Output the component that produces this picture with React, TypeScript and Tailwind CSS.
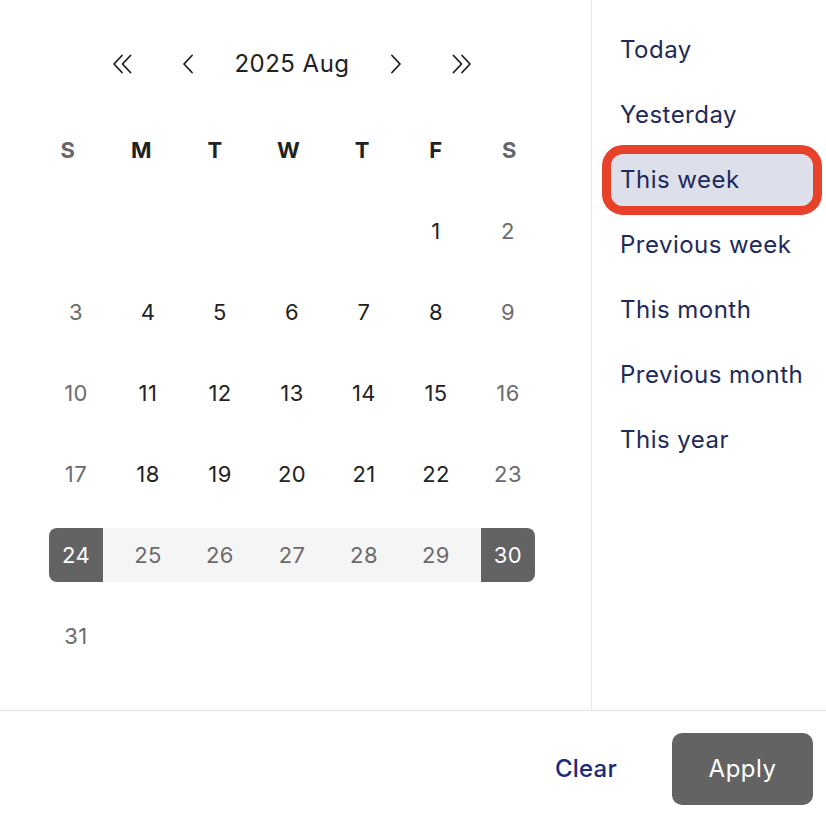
import React from 'react'

const font = { fontFamily: 'Inter, "Noto Sans", sans-serif' }

const Chevron = ({ dir, double }: { dir: 'left' | 'right'; double?: boolean }) => {
  const flip = dir === 'right' ? 'scale(-1,1)' : undefined
  if (double) {
    return (
      <svg width="22" height="20" viewBox="0 0 22 20" fill="none">
        <g transform={flip} style={{ transformOrigin: 'center' }}>
          <path
            d="M11 1.5 L3 10 L11 18.5 M19.5 1.5 L11.5 10 L19.5 18.5"
            stroke="#1f1f1f"
            strokeWidth="1.8"
            strokeLinecap="round"
            strokeLinejoin="round"
          />
        </g>
      </svg>
    )
  }
  return (
    <svg width="12" height="20" viewBox="0 0 12 20" fill="none">
      <g transform={flip} style={{ transformOrigin: 'center' }}>
        <path
          d="M10 1.5 L2 10 L10 18.5"
          stroke="#1f1f1f"
          strokeWidth="1.8"
          strokeLinecap="round"
          strokeLinejoin="round"
        />
      </g>
    </svg>
  )
}

const weekdays = ['S', 'M', 'T', 'W', 'T', 'F', 'S']

// August 2025 starts on a Friday
const weeks: (number | null)[][] = [
  [null, null, null, null, null, 1, 2],
  [3, 4, 5, 6, 7, 8, 9],
  [10, 11, 12, 13, 14, 15, 16],
  [17, 18, 19, 20, 21, 22, 23],
  [24, 25, 26, 27, 28, 29, 30],
  [31, null, null, null, null, null, null],
]

const rangeStart = 24
const rangeEnd = 30

const presets = [
  'Today',
  'Yesterday',
  'This week',
  'Previous week',
  'This month',
  'Previous month',
  'This year',
]

const DayCell = ({ day, col }: { day: number | null; col: number }) => {
  if (day === null) return <div className="w-[72px] h-[54px]" />
  const isStart = day === rangeStart
  const isEnd = day === rangeEnd
  const inRange = day > rangeStart && day < rangeEnd
  const weekend = col === 0 || col === 6

  let outer = 'w-[72px] h-[54px] flex items-center justify-center'
  if (inRange) outer += ' bg-[#f5f5f5]'
  if (isStart) outer += ' bg-[linear-gradient(to_right,transparent_50%,#f5f5f5_50%)]'
  if (isEnd) outer += ' bg-[linear-gradient(to_right,#f5f5f5_50%,transparent_50%)]'

  let inner = 'w-[54px] h-[54px] flex items-center justify-center text-[22px] tracking-[0.02em]'
  if (isStart || isEnd) {
    inner += ' bg-[#636363] text-white rounded-[8px]'
    if (isStart) inner += ' rounded-r-none'
    if (isEnd) inner += ' rounded-l-none'
  } else if (inRange || weekend) {
    inner += ' text-[#6b6b6b]'
  } else {
    inner += ' text-[#222222]'
  }

  return (
    <div className={outer}>
      <div className={inner}>{day}</div>
    </div>
  )
}

const App = () => {
  return (
    <div className="w-[826px] h-[820px] bg-white flex flex-col" style={font}>
      <div className="flex h-[711px] border-b border-[#e5e5e5]">
        {/* calendar */}
        <div className="w-[592px] border-r border-[#e5e5e5] pl-[40px] pt-[40px]">
          <div className="w-[504px] flex flex-col">
            <div className="h-[48px] flex items-center justify-center">
              <button className="w-[40px] h-[40px] flex items-center justify-center">
                <Chevron dir="left" double />
              </button>
              <button className="ml-[26px] w-[40px] h-[40px] flex items-center justify-center">
                <Chevron dir="left" />
              </button>
              <span className="mx-[26px] text-[24px] tracking-[0.02em] text-[#222222] leading-none">
                2025 Aug
              </span>
              <button className="w-[40px] h-[40px] flex items-center justify-center">
                <Chevron dir="right" />
              </button>
              <button className="ml-[26px] w-[40px] h-[40px] flex items-center justify-center">
                <Chevron dir="right" double />
              </button>
            </div>

            <div className="mt-[35px] flex flex-col gap-[27px]">
              <div className="grid grid-cols-7 w-[515px] -ml-[9px] h-[54px] items-center">
                {weekdays.map((d, i) => (
                  <div
                    key={i}
                    className={
                      'text-center text-[22px] font-bold ' +
                      (i === 0 || i === 6 ? 'text-[#666666]' : 'text-[#222222]')
                    }
                  >
                    {d}
                  </div>
                ))}
              </div>
              {weeks.map((week, wi) => (
                <div key={wi} className="flex">
                  {week.map((day, ci) => (
                    <DayCell key={ci} day={day} col={ci} />
                  ))}
                </div>
              ))}
            </div>
          </div>
        </div>

        {/* presets */}
        <div className="flex-1 pt-[24px] pl-[19px] pr-[13px] flex flex-col gap-[13px]">
          {presets.map((p) => {
            const active = p === 'This week'
            return (
              <div
                key={p}
                className={
                  'h-[52px] px-[9px] flex items-center text-[24px] tracking-[0.02em] text-[#1e2a5a] rounded-[12px] ' +
                  (active ? 'bg-[#dde0ea] outline-[9px] outline-solid outline-[#e8412a]' : '')
                }
              >
                {p}
              </div>
            )
          })}
        </div>
      </div>

      {/* footer */}
      <div className="flex-1 flex items-start justify-end pr-[13px] pt-[22px]">
        <button className="h-[72px] text-[24px] font-medium tracking-[0.01em] text-[#1a2b7a] mr-[55px]">
          Clear
        </button>
        <button className="w-[141px] h-[72px] rounded-[10px] bg-[#636363] text-white text-[24px] tracking-[0.02em]">
          Apply
        </button>
      </div>
    </div>
  )
}

export default App
